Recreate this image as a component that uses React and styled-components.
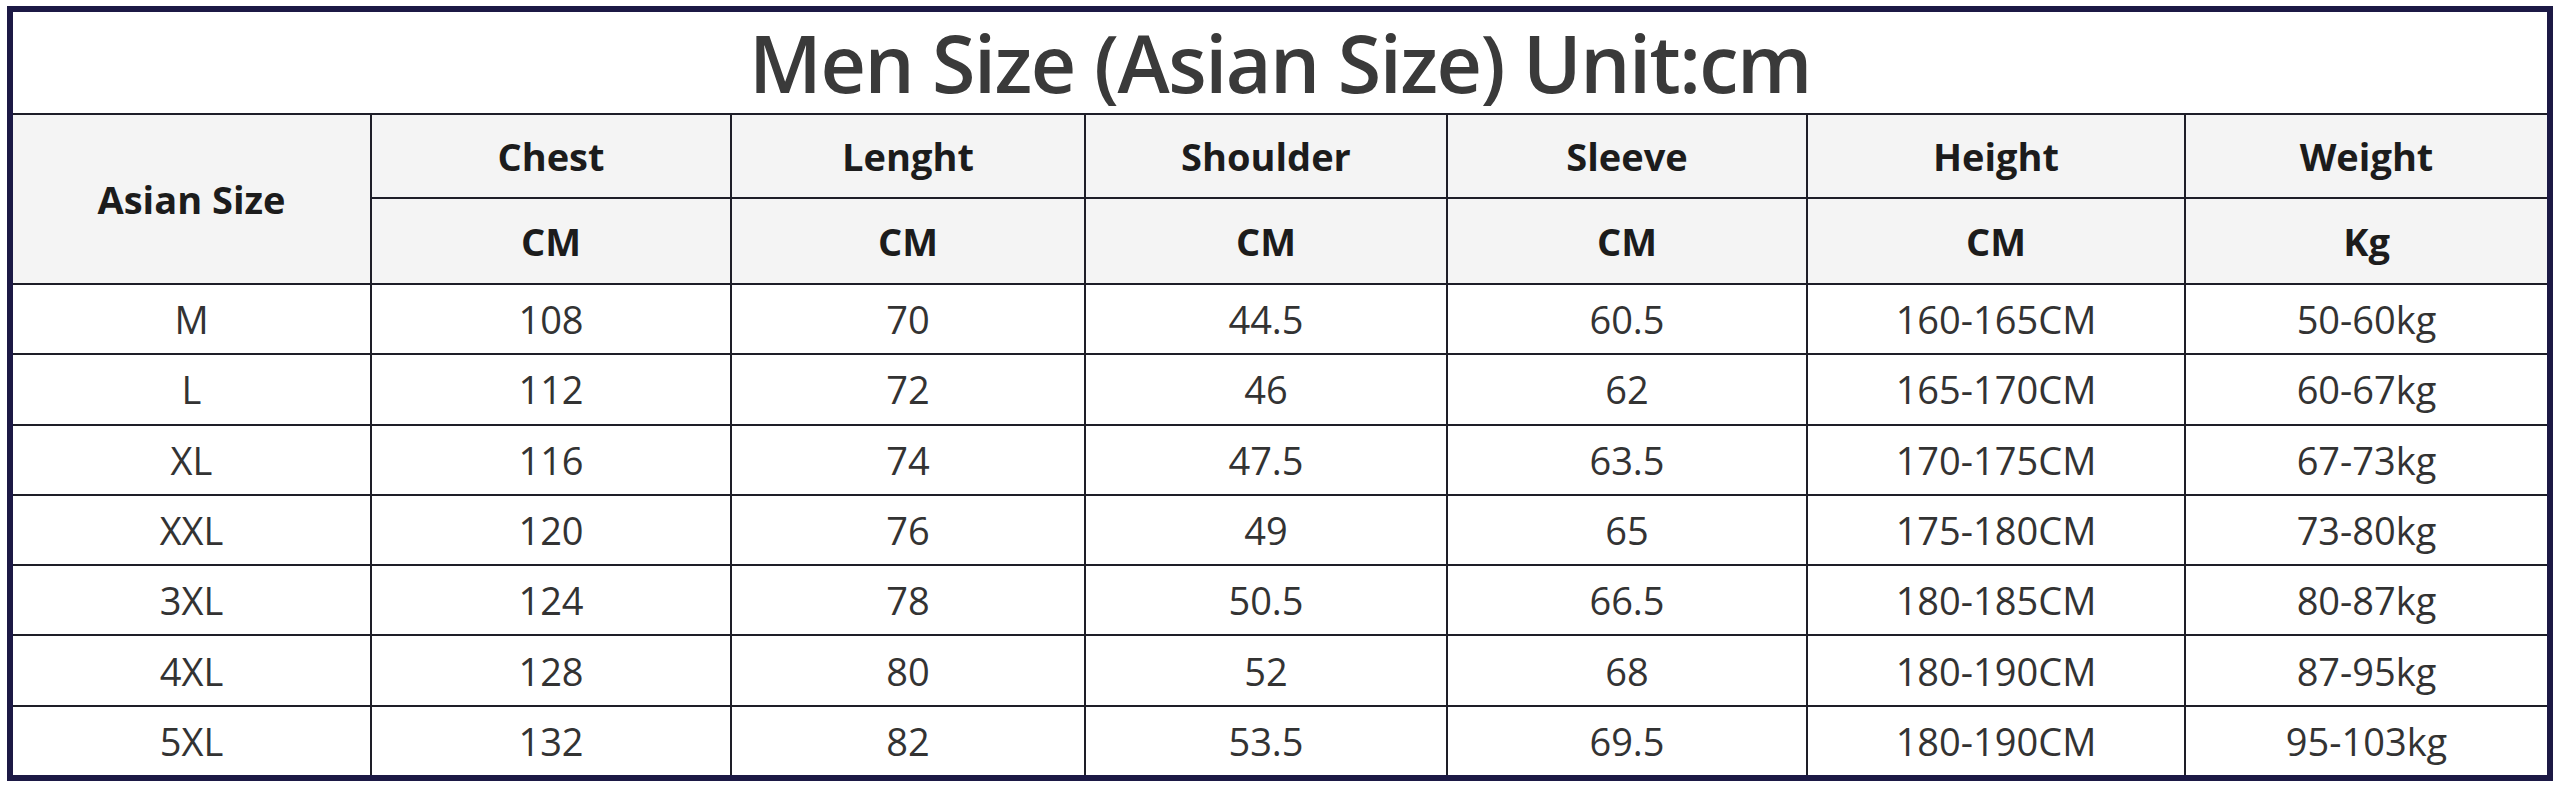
import React from "react";
import styled, { createGlobalStyle } from "styled-components";

const columns = [
  { name: "Chest", unit: "CM" },
  { name: "Lenght", unit: "CM" },
  { name: "Shoulder", unit: "CM" },
  { name: "Sleeve", unit: "CM" },
  { name: "Height", unit: "CM" },
  { name: "Weight", unit: "Kg" },
];

const rows = [
  ["M", "108", "70", "44.5", "60.5", "160-165CM", "50-60kg"],
  ["L", "112", "72", "46", "62", "165-170CM", "60-67kg"],
  ["XL", "116", "74", "47.5", "63.5", "170-175CM", "67-73kg"],
  ["XXL", "120", "76", "49", "65", "175-180CM", "73-80kg"],
  ["3XL", "124", "78", "50.5", "66.5", "180-185CM", "80-87kg"],
  ["4XL", "128", "80", "52", "68", "180-190CM", "87-95kg"],
  ["5XL", "132", "82", "53.5", "69.5", "180-190CM", "95-103kg"],
];

export default function App() {
  return (
    <>
      <GlobalStyle />
      <Frame>
        <Grid>
          <Title>Men Size (Asian Size) Unit:cm</Title>
          <SizeHead>Asian Size</SizeHead>
          {columns.map((c) => (
            <HeadCell key={c.name}>{c.name}</HeadCell>
          ))}
          {columns.map((c) => (
            <HeadCell key={c.name + "-unit"}>{c.unit}</HeadCell>
          ))}
          {rows.map((r) =>
            r.map((v, i) => <Cell key={r[0] + i}>{v}</Cell>)
          )}
        </Grid>
      </Frame>
    </>
  );
}

const GlobalStyle = createGlobalStyle`
  body {
    margin: 0;
    background: #ffffff;
    font-family: "Open Sans", "Noto Sans", sans-serif;
  }
`;

const Frame = styled.div`
  width: 2546px;
  height: 775px;
  box-sizing: border-box;
  margin: 6px 0 0 7px;
  border: 6px solid #1c1945;
  background: #ffffff;
`;

const Grid = styled.div`
  display: grid;
  height: 100%;
  grid-template-columns: 357px 358px 352px 360px 358px 376px 361px;
  grid-template-rows: 101px 82px 84px repeat(7, 1fr);
  gap: 2px;
  background: #1e1e28;
`;

const Title = styled.div`
  grid-column: 1 / -1;
  display: flex;
  align-items: center;
  justify-content: center;
  background: #ffffff;
  color: #3a3a3a;
  font-size: 79px;
  font-weight: 600;
  letter-spacing: -1.5px;
`;

const HeadCell = styled.div`
  display: flex;
  align-items: center;
  justify-content: center;
  background: #f4f4f4;
  color: #1c1c1c;
  font-size: 38px;
  font-weight: 700;
`;

const SizeHead = styled(HeadCell)`
  grid-row: 2 / span 2;
`;

const Cell = styled.div`
  display: flex;
  align-items: center;
  justify-content: center;
  background: #ffffff;
  color: #333333;
  font-size: 38px;
  font-weight: 400;
`;
